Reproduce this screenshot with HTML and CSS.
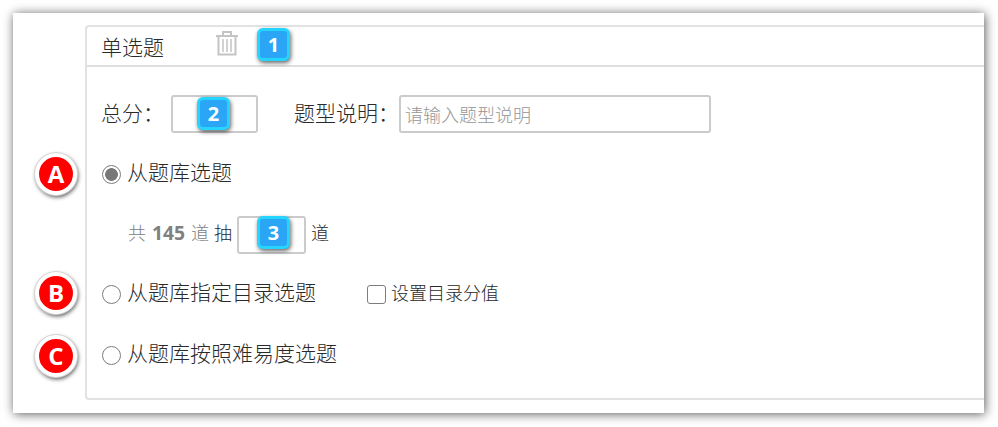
FILE: index.html
```html
<!DOCTYPE html>
<html lang="zh-CN">
<head>
<meta charset="utf-8">
<title>单选题</title>
<link rel="stylesheet" href="styles.css">
</head>
<body>
<main class="sheet">
  <section class="panel">
    <header class="panel-head">
      <span class="title">单选题</span>
      <svg class="trash" width="24" height="26" viewBox="0 0 24 26" fill="none" stroke="#c4c4c4" stroke-width="2">
        <path d="M1 6h22M8 6V2h8v4M3.500 6v18.500h17V6"/>
        <path d="M8 9v13M12 9v13M16 9v13" stroke-width="1.500"/>
      </svg>
      <span class="tag tag-one">1</span>
    </header>
    <div class="panel-body">
      <div class="row row-meta">
        <label class="label">总分：</label>
        <span class="box box-score"><input class="field" type="text"><span class="tag tag-two">2</span></span>
        <label class="label label-desc">题型说明：</label>
        <input class="field box-desc" type="text" placeholder="请输入题型说明">
      </div>
      <div class="row row-a">
        <span class="mark mark-a">A</span>
        <label class="choice"><input class="radio" type="radio" name="mode" checked>从题库选题</label>
      </div>
      <div class="row row-count">
        <span class="muted">共 <b>145</b> 道</span>
        <span class="draw">抽</span>
        <span class="box box-count"><input class="field" type="text"><span class="tag tag-three">3</span></span>
        <span class="draw">道</span>
      </div>
      <div class="row row-b">
        <span class="mark mark-b">B</span>
        <label class="choice"><input class="radio" type="radio" name="mode">从题库指定目录选题</label>
        <label class="check"><input class="checkbox" type="checkbox">设置目录分值</label>
      </div>
      <div class="row row-c">
        <span class="mark mark-c">C</span>
        <label class="choice"><input class="radio" type="radio" name="mode">从题库按照难易度选题</label>
      </div>
    </div>
  </section>
</main>
</body>
</html>
```
FILE: styles.css
```css
* { box-sizing: border-box; }
html, body { margin: 0; padding: 0; background: #fff; overflow: hidden; }
body {
  width: 998px;
  height: 427px;
  padding: 13px 14px 14px 13px;
  font-family: "Noto Sans CJK SC", "Noto Sans", sans-serif;
  font-weight: 300;
  color: #2a2a2a;
}
.sheet {
  width: 971px;
  height: 400px;
  padding: 12px 0 0 72px;
  background: #fff;
  box-shadow: 1px 1px 10px rgba(0, 0, 0, .65);
}
.panel {
  height: 375px;
  border: 2px solid #e2e2e2;
  border-right: 0;
  border-radius: 4px 0 0 4px;
}
.panel-head {
  position: relative;
  height: 40px;
  display: flex;
  align-items: center;
  padding-left: 14px;
  border-bottom: 2px solid #dedede;
}
.title { font-size: 21px; line-height: 38px; }
.trash { margin-left: 51px; margin-top: -6px; }
.panel-body { padding: 27px 0 0 14px; }
.row { position: relative; display: flex; align-items: center; height: 40px; }
.row-a { margin-top: 20px; }
.row-count { margin-top: 21px; padding-left: 27px; font-size: 18px; padding-bottom: 6px; }
.row-b { margin-top: 19px; }
.row-c { margin-top: 21px; }
.label { font-size: 21px; line-height: 30px; white-space: nowrap; padding-bottom: 5px; }
.label-desc { margin-left: 36px; }
.box { position: relative; display: block; height: 38px; }
.box-score { width: 87px; margin-left: 7px; }
.box-count { width: 69px; margin: 6px 5px 0; }
.field {
  display: block;
  width: 100%;
  height: 38px;
  border: 2px solid #cbcbcb;
  border-radius: 3px;
  background: #fff;
  padding: 0 4px;
  font: inherit;
  font-size: 18px;
  outline: none;
}
.box-desc { width: 312px; }
.field::placeholder { color: #969696; opacity: 1; }
.choice { display: flex; align-items: center; font-size: 21px; line-height: 30px; white-space: nowrap; padding-bottom: 6px; }
.radio {
  appearance: none;
  width: 19px;
  height: 19px;
  margin: 6px 6px 0 1px;
  border: 1px solid #7d7d7d;
  border-radius: 50%;
  background: #fff;
  flex: none;
}
.radio:checked { background: radial-gradient(circle, #777 0 6px, #fff 6.700px); }
.check { display: flex; align-items: center; margin-left: 51px; font-size: 18px; line-height: 26px; white-space: nowrap; padding-bottom: 4px; }
.checkbox {
  appearance: none;
  width: 19px;
  height: 19px;
  margin: 5px 5px 0 0;
  border: 1.500px solid #7d7d7d;
  border-radius: 3px;
  background: #fff;
  flex: none;
}
.muted { color: #808080; margin-right: 5px; white-space: pre; word-spacing: 2px; }
.muted b { font-family: "Open Sans", sans-serif; font-weight: 700; font-size: 19.300px; }
.draw { color: #2a2a2a; }
.tag {
  position: absolute;
  width: 33px;
  height: 33px;
  border: 3px solid #25d5ff;
  border-radius: 6px;
  background: #2ba6f6;
  color: #fff;
  font: 700 20px/27px "Open Sans", sans-serif;
  text-align: center;
  box-shadow: 1px 2px 4px rgba(0, 0, 0, .6);
}
.tag-one { left: 170px; top: 1px; }
.tag-two { left: 26px; top: 2px; }
.tag-three { left: 20px; top: 0; }
.mark {
  position: absolute;
  left: -66px;
  width: 42px;
  height: 42px;
  border: 4px solid #fff;
  border-radius: 50%;
  background: #f00;
  color: #fff;
  font: 700 24px/33px "Open Sans", sans-serif;
  text-align: center;
  box-shadow: 0 0 0 1px #d5d5d5, 1px 2px 4px rgba(0, 0, 0, .7);
}
.mark-a { top: -1px; }
.mark-b { top: -2px; }
.mark-c { top: 0; }
```
